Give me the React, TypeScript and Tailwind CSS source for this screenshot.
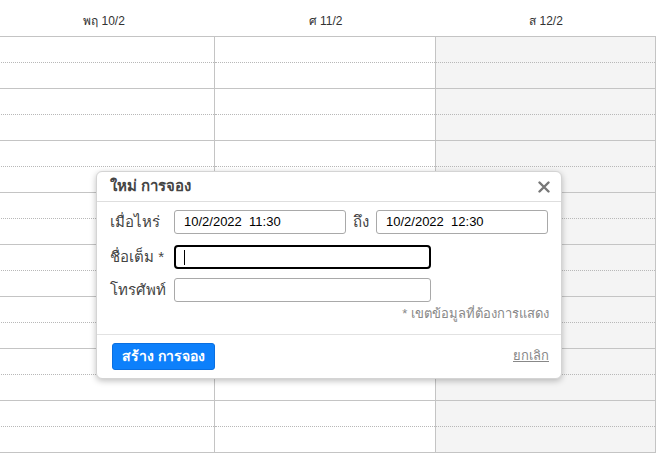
import type { FC } from "react";

const days = ["พฤ 10/2", "ศ 11/2", "ส 12/2"];
const slots = Array.from({ length: 8 }, (_, i) => i);

const font = { fontFamily: '"Liberation Sans", "Noto Sans", Arial, sans-serif' };

const DayColumn: FC<{ weekend?: boolean; last?: boolean; width: string }> = ({ weekend, last, width }) => (
  <div className={`${width} ${last ? "" : "border-r border-[#c4c4c4]"} ${weekend ? "bg-[#f4f4f4]" : "bg-white"}`}>
    {slots.map((s) => (
      <div key={s}>
        <div className="h-[26px] border-b border-dotted border-[#b8b8b8]" />
        <div className="h-[26px] border-b border-[#c4c4c4]" />
      </div>
    ))}
  </div>
);

const BookingDialog: FC = () => (
  <div className="absolute top-[171px] left-[96px] w-[466px] rounded-[6px] border border-[#d4d4d4] bg-white text-[#333] shadow-[0_2px_6px_rgba(0,0,0,0.25)]">
    <div className="flex h-[30px] items-center justify-between border-b border-[#dedede] pr-[11px] pl-[13px]">
      <span className="text-[15px] font-bold text-[#444]">ใหม่ การจอง</span>
      <svg width="12" height="12" viewBox="0 0 12 12" aria-hidden="true">
        <path d="M1.5 1.5 L10.5 10.5 M10.5 1.5 L1.5 10.5" stroke="#777" strokeWidth="2.4" strokeLinecap="round" />
      </svg>
    </div>

    <div className="flex flex-col pt-[8px] pr-[12px] pb-[10px] pl-[13px]">
      <div className="flex h-[24px] items-center">
        <span className="w-[64px] text-[15px] text-[#444]">เมื่อไหร่</span>
        <div className="flex h-[24px] w-[172px] items-center rounded-[3px] border border-[#a9a9a9] pl-[9px] text-[13px] whitespace-pre text-black">
          10/2/2022  11:30
        </div>
        <span className="w-[30px] pl-[7px] text-[15px] text-[#444]">ถึง</span>
        <div className="flex h-[24px] w-[172px] items-center rounded-[3px] border border-[#a9a9a9] pl-[9px] text-[13px] whitespace-pre text-black">
          10/2/2022  12:30
        </div>
      </div>

      <div className="mt-[11px] flex h-[24px] items-center">
        <span className="w-[64px] text-[15px] text-[#444]">ชื่อเต็ม *</span>
        <div className="flex h-[24px] w-[257px] items-center rounded-[4px] border-2 border-black pl-[8px]">
          <span className="h-[15px] w-px bg-black" />
        </div>
      </div>

      <div className="mt-[9px] flex h-[24px] items-center">
        <span className="w-[64px] text-[15px] text-[#444]">โทรศัพท์</span>
        <div className="h-[24px] w-[257px] rounded-[3px] border border-[#a9a9a9]" />
      </div>

      <div className="mt-[2px] text-right text-[13px] text-[#888]">* เขตข้อมูลที่ต้องการแสดง</div>
    </div>

    <div className="flex items-center justify-between border-t border-[#e2e2e2] pt-[8px] pr-[12px] pb-[8px] pl-[15px]">
      <button
        type="button"
        className="h-[27px] rounded-[3px] border border-[#0a6fe0] bg-[#0d80fb] px-[9px] text-[14px] font-bold text-white"
      >
        สร้าง การจอง
      </button>
      <span className="text-[13px] text-[#888] underline">ยกเลิก</span>
    </div>
  </div>
);

export default function App() {
  return (
    <div className="relative h-[466px] w-[665px] overflow-hidden bg-white" style={font}>
      <div className="ml-[-7px] w-[663px]">
        <div className="flex h-[36px] items-center pt-[6px] text-[12px] text-[#333]">
          <div className="w-[222px] text-center">{days[0]}</div>
          <div className="w-[221px] text-center">{days[1]}</div>
          <div className="w-[220px] text-center">{days[2]}</div>
        </div>
        <div className="flex border-t border-r border-[#c4c4c4]">
          <DayColumn width="w-[222px]" />
          <DayColumn width="w-[221px]" />
          <DayColumn width="w-[219px]" weekend last />
        </div>
      </div>
      <BookingDialog />
    </div>
  );
}
